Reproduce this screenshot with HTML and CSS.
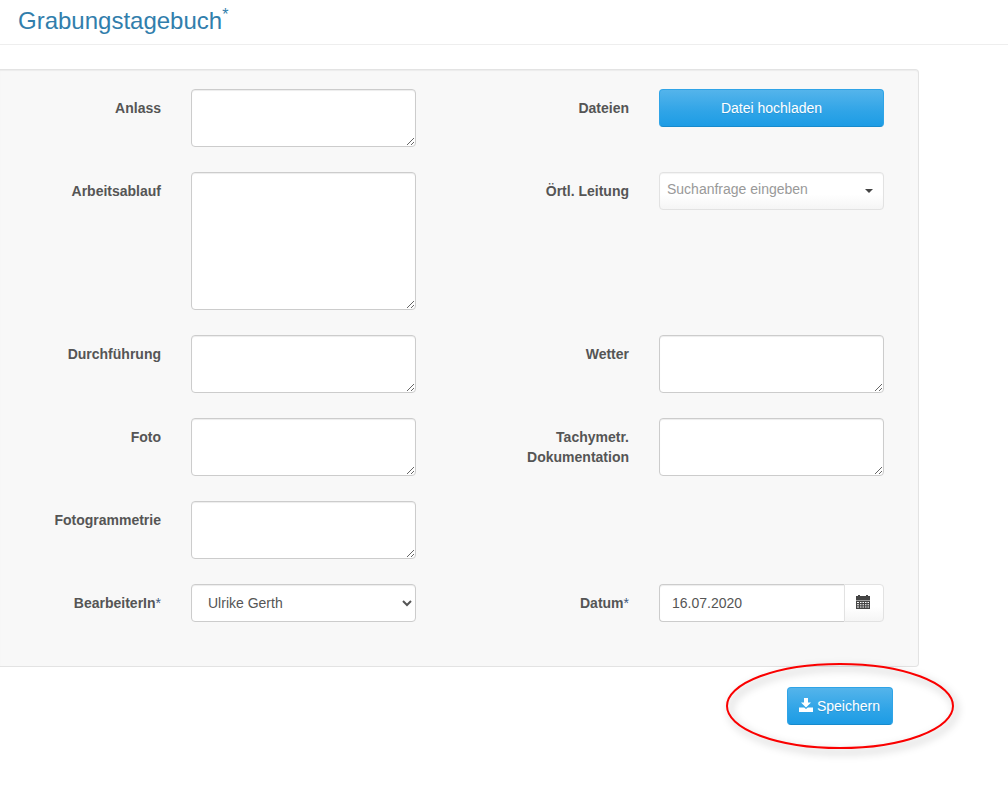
FILE: index.html
```html
<!DOCTYPE html>
<html lang="de">
<head>
<meta charset="utf-8">
<meta name="viewport" content="width=device-width, initial-scale=1">
<title>Grabungstagebuch</title>
<link rel="stylesheet" href="styles.css">
</head>
<body>
<header class="page-header">
  <h1 class="page-title">Grabungstagebuch<sup class="page-title-mark">*</sup></h1>
</header>
<form class="diary-form">
  <div class="panel">
    <label class="label" for="anlass">Anlass</label>
    <textarea class="control area" id="anlass"></textarea>
    <label class="label label-right" for="dateien">Dateien</label>
    <button class="button" id="dateien" type="button">Datei hochladen</button>

    <label class="label" for="arbeitsablauf">Arbeitsablauf</label>
    <textarea class="control area area-tall" id="arbeitsablauf"></textarea>
    <label class="label label-right" for="leitung">Örtl. Leitung</label>
    <div class="search-select">
      <select class="search-select-input" id="leitung"><option>Suchanfrage eingeben</option></select>
    </div>

    <label class="label" for="durchfuehrung">Durchführung</label>
    <textarea class="control area" id="durchfuehrung"></textarea>
    <label class="label label-right" for="wetter">Wetter</label>
    <textarea class="control area" id="wetter"></textarea>

    <label class="label" for="foto">Foto</label>
    <textarea class="control area" id="foto"></textarea>
    <label class="label label-right" for="tachymetrie">Tachymetr. Dokumentation</label>
    <textarea class="control area" id="tachymetrie"></textarea>

    <label class="label label-first" for="fotogrammetrie">Fotogrammetrie</label>
    <textarea class="control area" id="fotogrammetrie"></textarea>

    <label class="label label-first" for="bearbeiter">BearbeiterIn<span class="required">*</span></label>
    <select class="control select" id="bearbeiter"><option>Ulrike Gerth</option></select>
    <label class="label label-right" for="datum">Datum<span class="required">*</span></label>
    <div class="date-group">
      <input class="control date-input" id="datum" type="text" value="16.07.2020">
      <button class="date-button" type="button" aria-label="Kalender öffnen">
        <svg width="14" height="14" viewBox="0 0 14 14" aria-hidden="true">
          <path fill="currentColor" fill-rule="evenodd" d="M0 1h2V0h2v1h6V0h2v1h2v4H0zM0 5.6h14V14H0zM1 7v1h2V7zM4 7v1h1.500V7zM6.500 7v1H8V7zM9 7v1h1.500V7zM11.500 7v1H13V7zM1 9.200v1h2v-1zM4 9.200v1h1.500v-1zM6.500 9.200v1H8v-1zM9 9.200v1h1.500v-1zM11.500 9.200v1H13v-1zM1 11.500v1h2v-1zM4 11.500v1h1.500v-1zM6.500 11.500v1H8v-1zM9 11.500v1h1.500v-1zM11.500 11.500v1H13v-1z"/>
        </svg>
      </button>
    </div>
  </div>
  <div class="actions">
    <div class="save">
      <button class="button" type="submit">
        <svg width="14" height="14" viewBox="0 0 14 14" aria-hidden="true">
          <path fill="currentColor" d="M5 0h4v4.500h3L7 9.500 2 4.500h3zM0 9.500h5.200L7 11l1.800-1.500H14V14H0z"/>
        </svg>
        Speichern
      </button>
      <svg class="save-ring" width="248" height="106" viewBox="0 0 248 106" aria-hidden="true">
        <ellipse cx="124" cy="53" rx="113" ry="42" fill="none" stroke="#fa0000" stroke-width="2"/>
      </svg>
    </div>
  </div>
</form>
</body>
</html>
```
FILE: styles.css
```css
* {
  box-sizing: border-box;
}

body {
  margin: 0;
  background: #fff;
  color: #555;
  font: 14px/20px "Liberation Sans", Arial, sans-serif;
}

.page-header {
  padding: 7px 18px 10px;
  border-bottom: 1px solid #eee;
}

.page-title {
  margin: 0;
  color: #317eac;
  font-size: 24px;
  font-weight: 400;
  line-height: 27px;
}

.page-title-mark {
  position: relative;
  top: -9px;
  font-size: 16px;
  line-height: 0;
  vertical-align: baseline;
}

.diary-form {
  margin: 24px 89px 0 0;
}

.panel {
  display: grid;
  grid-template-columns: 161fr 225fr 183fr 225fr;
  gap: 25px 30px;
  align-items: start;
  padding: 19px 34px 44px 0;
  border: 1px solid #e3e3e3;
  border-left: 0;
  border-radius: 0 4px 4px 0;
  background: #f8f8f8;
  box-shadow: inset 0 1px 1px rgba(0, 0, 0, 0.05);
}

.label {
  padding-top: 9px;
  font-weight: 700;
  text-align: right;
}

.label-first {
  grid-column: 1;
}

.label-right {
  padding-left: 50px;
}

.required {
  color: #3d5a80;
  font-weight: 400;
}

.control {
  width: 100%;
  min-width: 0;
  margin: 0;
  border: 1px solid #ccc;
  border-radius: 4px;
  background: #fff;
  box-shadow: inset 0 1px 1px rgba(0, 0, 0, 0.075);
  color: #555;
  font: inherit;
}

.area {
  display: block;
  height: 58px;
  padding: 8px 12px;
  resize: vertical;
}

.area-tall {
  height: 138px;
}

.select {
  height: 38px;
  padding: 8px 12px;
}

.button {
  padding: 8px 12px;
  border: 1px solid #2fa4e7;
  border-color: #2fa4e7 #2fa4e7 #178acc;
  border-radius: 4px;
  background: linear-gradient(#54b4eb, #2fa4e7 60%, #1d9ce5);
  color: #fff;
  font: inherit;
  text-shadow: 0 1px 0 rgba(0, 0, 0, 0.1);
}

.search-select {
  position: relative;
}

.search-select::after {
  content: "";
  position: absolute;
  top: 17px;
  right: 11px;
  border: 4px solid transparent;
  border-top-color: #444;
  border-bottom: 0;
  pointer-events: none;
}

.search-select-input {
  display: block;
  width: 100%;
  height: 38px;
  padding: 6px 30px 10px 7px;
  border: 1px solid #e2e2e2;
  border-radius: 4px;
  appearance: none;
  background: linear-gradient(#fff, #fff 60%, #f5f5f5);
  box-shadow: inset 0 1px 1px rgba(0, 0, 0, 0.05);
  color: #999;
  font: inherit;
}

.date-group {
  display: flex;
}

.date-input {
  flex: 1;
  height: 38px;
  padding: 8px 12px;
  border-right: 0;
  border-radius: 4px 0 0 4px;
}

.date-button {
  display: flex;
  align-items: center;
  justify-content: center;
  width: 40px;
  padding: 0 2px 2px 0;
  border: 1px solid #e2e2e2;
  border-radius: 0 4px 4px 0;
  background: linear-gradient(#fff, #fff 60%, #f5f5f5);
  color: #444;
}

.actions {
  display: flex;
  justify-content: flex-end;
  padding: 20px 26px 60px 0;
}

.save {
  position: relative;
}

.save .button {
  display: flex;
  align-items: center;
  gap: 4px;
  padding: 8px 12px 8px 11px;
}

.save .button svg {
  margin-bottom: 2px;
}

.save-ring {
  position: absolute;
  top: 50%;
  left: 50%;
  overflow: visible;
  transform: translate(-50%, -50%);
  filter: drop-shadow(3px 4px 4px rgba(0, 0, 0, 0.35));
  pointer-events: none;
}
```
